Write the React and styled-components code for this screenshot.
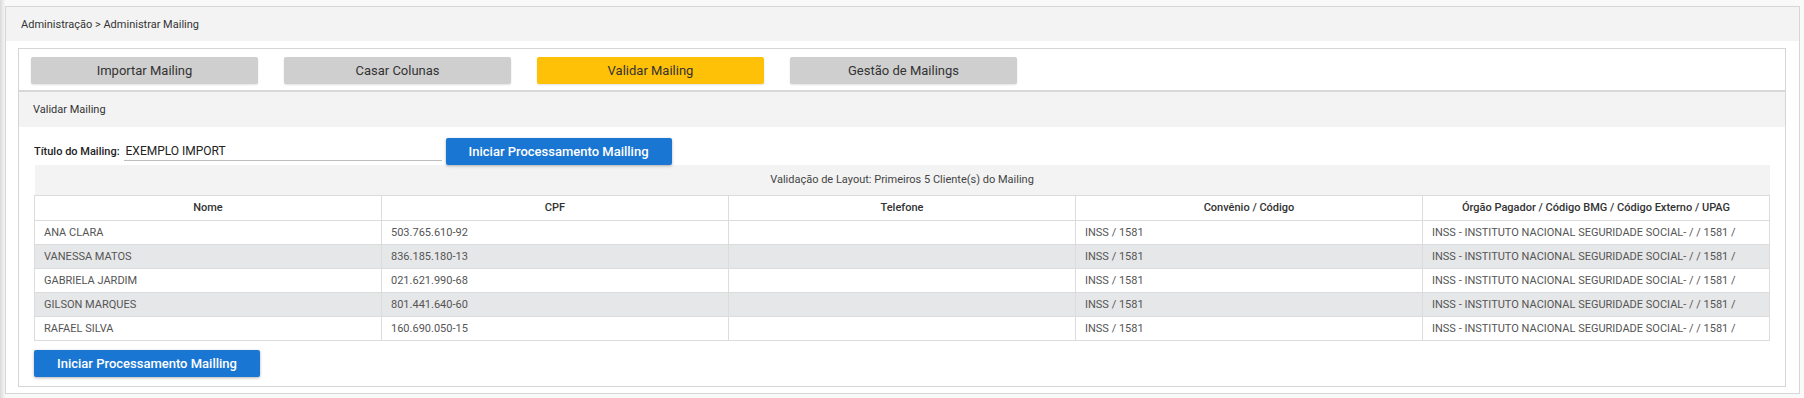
import React, { useState } from 'react';
import styled, { createGlobalStyle } from 'styled-components';

const GlobalStyle = createGlobalStyle`
  html, body {
    margin: 0;
    padding: 0;
    background: #f9f9f9;
    font-family: Roboto, 'Liberation Sans', Arial, sans-serif;
    color: #333;
  }
  * {
    box-sizing: border-box;
  }
`;

const tabs = ['Importar Mailing', 'Casar Colunas', 'Validar Mailing', 'Gestão de Mailings'];

const columns = [
  'Nome',
  'CPF',
  'Telefone',
  'Convênio / Código',
  'Órgão Pagador / Código BMG / Código Externo / UPAG',
];

const orgao = 'INSS - INSTITUTO NACIONAL SEGURIDADE SOCIAL- / / 1581 /';

const clients = [
  { nome: 'ANA CLARA', cpf: '503.765.610-92' },
  { nome: 'VANESSA MATOS', cpf: '836.185.180-13' },
  { nome: 'GABRIELA JARDIM', cpf: '021.621.990-68' },
  { nome: 'GILSON MARQUES', cpf: '801.441.640-60' },
  { nome: 'RAFAEL SILVA', cpf: '160.690.050-15' },
];

const App = () => {
  const [activeTab, setActiveTab] = useState(2);
  const [titulo, setTitulo] = useState('EXEMPLO IMPORT');

  return (
    <>
      <GlobalStyle />
      <Page>
        <Panel>
          <Breadcrumb>Administração &gt; Administrar Mailing</Breadcrumb>
          <PanelBody>
            <Card>
              <TabBar>
                {tabs.map((tab, idx) => (
                  <TabButton
                    key={tab}
                    active={idx === activeTab}
                    onClick={() => setActiveTab(idx)}
                  >
                    {tab}
                  </TabButton>
                ))}
              </TabBar>
              <SectionTitle>Validar Mailing</SectionTitle>
              <CardBody>
                <FormRow>
                  <Label>Título do Mailing:</Label>
                  <Input value={titulo} onChange={(e) => setTitulo(e.target.value)} />
                  <BlueButton>Iniciar Processamento Mailling</BlueButton>
                </FormRow>
                <Table>
                  <thead>
                    <tr>
                      <Caption colSpan={5}>
                        Validação de Layout: Primeiros 5 Cliente(s) do Mailing
                      </Caption>
                    </tr>
                    <tr>
                      {columns.map((col) => (
                        <Th key={col}>{col}</Th>
                      ))}
                    </tr>
                  </thead>
                  <tbody>
                    {clients.map((client, idx) => (
                      <Row key={client.cpf} striped={idx % 2 === 1}>
                        <Td>{client.nome}</Td>
                        <Td>{client.cpf}</Td>
                        <Td></Td>
                        <Td>INSS / 1581</Td>
                        <Td>{orgao}</Td>
                      </Row>
                    ))}
                  </tbody>
                </Table>
                <BottomActions>
                  <BlueButton>Iniciar Processamento Mailling</BlueButton>
                </BottomActions>
              </CardBody>
            </Card>
          </PanelBody>
        </Panel>
      </Page>
    </>
  );
};

const Page = styled.div`
  padding: 6px 4px 5px 5px;
  min-height: 398px;
  background: linear-gradient(to right, #d9d9d9 0, #ececec 3px, #f9f9f9 6px);
`;

const Panel = styled.div`
  border: 1px solid #d6d6d6;
  background: #fff;
`;

const Breadcrumb = styled.div`
  height: 34px;
  display: flex;
  align-items: center;
  padding-left: 15px;
  background: #f3f3f3;
  font-size: 11px;
  color: #333;
`;

const PanelBody = styled.div`
  padding: 7px 13px 6px 12px;
`;

const Card = styled.div`
  border: 1px solid #d5d5d5;
`;

const TabBar = styled.div`
  display: flex;
  gap: 26px;
  padding: 8px 12px 6px;
  border-bottom: 2px solid #d8d8d8;
`;

const TabButton = styled.button`
  width: 227px;
  height: 27px;
  border: none;
  border-radius: 2px;
  background: ${(props) => (props.active ? '#ffc107' : '#cfcfcf')};
  box-shadow: 0 1px 2px rgba(0, 0, 0, 0.12);
  font-family: Roboto, 'Liberation Sans', Arial, sans-serif;
  font-size: 13px;
  color: #333;
  cursor: pointer;
`;

const SectionTitle = styled.div`
  height: 35px;
  display: flex;
  align-items: center;
  padding-left: 14px;
  background: #f3f3f3;
  font-size: 11px;
  color: #333;
`;

const CardBody = styled.div`
  padding: 10px 15px 9px;
`;

const FormRow = styled.div`
  display: flex;
  align-items: center;
  height: 28px;
`;

const Label = styled.label`
  font-size: 11px;
  font-weight: 500;
  color: #222;
  margin-right: 4px;
`;

const Input = styled.input`
  width: 318px;
  height: 20px;
  border: none;
  border-bottom: 1px solid #bdbdbd;
  padding: 0 2px;
  margin-right: 4px;
  outline: none;
  font-family: Roboto, 'Liberation Sans', Arial, sans-serif;
  font-size: 12px;
  color: #222;
  background: transparent;
`;

const BlueButton = styled.button`
  width: 226px;
  height: 27px;
  border: none;
  border-radius: 2px;
  background: #1976d2;
  box-shadow: 0 1px 3px rgba(0, 0, 0, 0.3);
  font-family: Roboto, 'Liberation Sans', Arial, sans-serif;
  font-size: 13px;
  font-weight: 500;
  color: #fff;
  cursor: pointer;
`;

const Table = styled.table`
  width: 100%;
  border-collapse: collapse;
  table-layout: fixed;
  font-size: 11px;
  color: #444;
`;

const Caption = styled.th`
  height: 30px;
  background: #f3f3f3;
  font-weight: 400;
  text-align: center;
  color: #444;
  border-bottom: 1px solid #dcdcdc;
`;

const Th = styled.th`
  height: 25px;
  border: 1px solid #dcdcdc;
  font-weight: 500;
  text-align: center;
  color: #333;
`;

const Row = styled.tr`
  background: ${(props) => (props.striped ? '#e6e7e8' : '#fff')};
`;

const Td = styled.td`
  height: 24px;
  padding: 0 9px;
  border: 1px solid #dcdcdc;
  color: #555;
  white-space: nowrap;
`;

const BottomActions = styled.div`
  margin-top: 9px;
`;

export default App;
